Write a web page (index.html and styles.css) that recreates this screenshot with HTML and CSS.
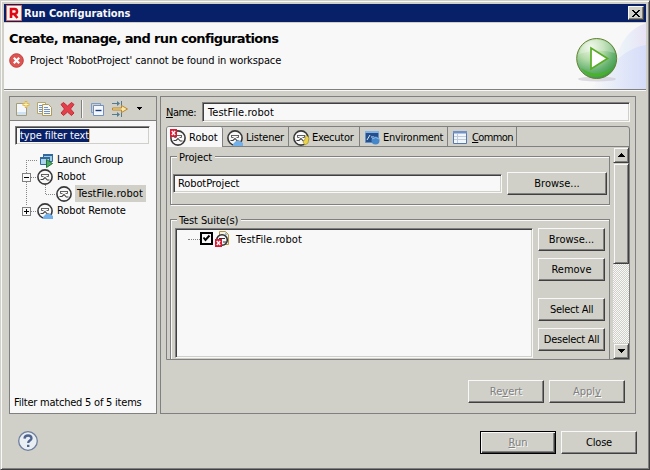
FILE: index.html
```html
<!DOCTYPE html>
<html lang="en">
<head>
<meta charset="utf-8">
<title>Run Configurations</title>
<link rel="stylesheet" href="styles.css">
</head>
<body>
<svg class="defs" aria-hidden="true">
  <defs>
    <radialGradient id="ball" cx="35%" cy="22%" r="80%"><stop offset="0" stop-color="#eef6e8"/><stop offset=".4" stop-color="#b4dba9"/><stop offset=".75" stop-color="#65b16f"/><stop offset="1" stop-color="#3f9a45"/></radialGradient>
    <linearGradient id="sky" x2="1"><stop offset="0" stop-color="#f8f8f8"/><stop offset=".5" stop-color="#eaf0f8"/><stop offset="1" stop-color="#e8e2f5"/></linearGradient>
    <linearGradient id="wave" x2="1"><stop offset="0" stop-color="#f8f8f8"/><stop offset=".5" stop-color="#e4eaf8"/><stop offset="1" stop-color="#d5dcf8"/></linearGradient>
    <symbol id="robot" viewBox="0 0 16 16">
      <circle cx="8" cy="8" r="7.1" fill="#f8f8f8" stroke="#383838" stroke-width="1.6"/>
      <path d="M4 5.500h8M4.500 5.500v2h2M11.500 5.500v2h-2" fill="none" stroke="#505050" stroke-width=".9"/>
      <path d="M3.500 10.500h2.500l2-2 2.300 2.500h2.200" fill="none" stroke="#404040" stroke-width="1.1"/>
    </symbol>
    <symbol id="redx" viewBox="0 0 7 8"><path d="M0 0h7v8H0z" fill="#d91c35"/><path d="M1.800 2l3.400 4M5.200 2L1.800 6" stroke="#fff" stroke-width="1.300"/></symbol>
  </defs>
</svg>
<div class="window">
  <div class="titlebar">
    <svg class="logo" width="16" height="16" viewBox="0 0 16 16"><path d="M.5.5h15v15H.5z" fill="#f8f8f0" stroke="#e66a60"/><path d="M5 13V4h3.500a2.200 2.200 0 0 1 0 5H5M8 9l3.500 4" fill="none" stroke="#e00814" stroke-width="2.600"/></svg>
    <span class="title">Run Configurations</span>
    <button class="x"><svg width="8" height="7" viewBox="0 0 8 7" shape-rendering="crispEdges"><path d="M0 0h2v1h1v1h2V1h1V0h2v1H7v1H6v1H5v1h1v1h1v1h1v1H6V6H5V5H3v1H2v1H0V6h1V5h1V4h1V3H2V2H1V1H0z"/></svg></button>
  </div>
  <header class="header">
    <div class="headtext">
      <h1>Create, manage, and run configurations</h1>
      <p class="error"><svg width="16" height="16" viewBox="0 0 16 16"><circle cx="7.500" cy="8.500" r="6.800" fill="#dc5552" stroke="#c43d3d"/><path d="M4.800 5.800l5.400 5.400M10.200 5.800l-5.400 5.400" stroke="#fff" stroke-width="2.200"/></svg><span class="t-error">Project 'RobotProject' cannot be found in workspace</span></p>
    </div>
    <svg class="banner" width="76" height="66" viewBox="0 0 76 66">
      <path d="M76 0C57 7 46 21 38 66h38z" fill="url(#sky)"/><path d="M76 22C56 25 44 38 20 66h56z" fill="url(#wave)"/>
      <ellipse cx="27" cy="56" rx="19" ry="2.500" fill="#c9c4d2" opacity=".6"/>
      <circle cx="26.700" cy="35.500" r="20" fill="url(#ball)" stroke="#64812f"/>
      <path d="M11 45a18.500 18.500 0 0 0 31 0q-15 11-31 0" fill="#46b51d" opacity=".8"/>
      <path d="M9 31q4-14 18-14t18 13q-17-5-36 1" fill="#fff" opacity=".25"/>
      <path d="M21 25v21l16.500-10.500z" fill="#fff" stroke="#58ad24" stroke-width="1.700"/>
    </svg>
  </header>
  <main class="main">
    <section class="side">
      <div class="toolbar">
        <svg width="16" height="16" viewBox="0 0 16 16"><path d="M1.500 2.500h7l3 4v8h-10z" fill="#f4f7fb" stroke="#a59c78"/><path d="M2 11h9v3H2z" fill="#cfe2f5"/><path d="M11 0v7M7.500 3.500h7" stroke="#dfb341" stroke-width="2.400"/><path d="M11 1v5M8.500 3.500h5" stroke="#fff3b8"/></svg>
        <svg width="16" height="16" viewBox="0 0 16 16"><path d="M.5 1.500h8v11h-8z" fill="#f8f8f4" stroke="#b5a66c"/><path d="M2 4.500h3M2 6.500h3M2 8.500h3M2 10.500h3" stroke="#7391c2"/><path d="M5.500 3.500h6l3 3v8h-9z" fill="#f8f8f4" stroke="#ad9b5e"/><path d="M7 6.500h4M7 8.500h6M7 10.500h6M7 12.500h6" stroke="#7391c2"/></svg>
        <svg width="16" height="16" viewBox="0 0 16 16"><path d="M2 3.500l2.500-2L8.500 5l4-3.500 2.500 2L11.500 8l3.500 4-2.500 2.500-4-3.500-4 3.500L2 12l3.500-4z" fill="#e2404a" stroke="#c52c38"/></svg>
        <i class="sep"></i>
        <svg width="16" height="16" viewBox="0 0 16 16"><path d="M2.500 11.500v-9h9v2M2.500 11.500h2" fill="none" stroke="#7b9bc9"/><path d="M4.500 4.500h10v10h-10z" fill="#f4f8fc" stroke="#718fc0"/><path d="M6.500 9.500h6" stroke="#173d83" stroke-width="1.400"/></svg>
        <svg width="18" height="16" viewBox="-1 0 18 16"><path d="M0 2.500h6M0 13.500h6M9.500 0v5M9.500 11v5" stroke="#547c91"/><path d="M5 0l3 2.500L5 5zM5 11l3 2.500L5 16z" fill="#547c91"/><path d="M.5 7h9V4.500l6 3.500-6 3.500V9h-9z" fill="#f7e8a6" stroke="#bd842a"/></svg>
        <svg width="5" height="3" viewBox="0 0 5 3" class="drop" shape-rendering="crispEdges"><path d="M0 0h5v1H4v1H3v1H2V2H1V1H0z"/></svg>
      </div>
      <div class="filter field"><span class="sel t-filter">type filter text</span></div>
      <div class="tree">
        <svg class="lines" width="45" height="70" viewBox="0 0 45 70" shape-rendering="crispEdges">
          <path d="M10.500 9v45M10 9.500h12M15 26.500h6M15 60.500h6M29.500 34v10M30 43.500h10" stroke="#888" stroke-dasharray="1 1" fill="none"/>
          <path d="M6.500 22.500h8v8h-8zM6.500 56.500h8v8h-8z" fill="#f8f8f8" stroke="#808080"/><path d="M8 26.500h5M8 60.500h5M10.500 58v5" stroke="#000"/>
        </svg>
        <div class="node n1"><svg width="16" height="16" viewBox="-1 0 16 16"><path d="M5.500 2.500h9v7h-9z" fill="#9fcbe5" stroke="#326a9e"/><path d="M5 2h10v2H5z" fill="#326a9e"/><path d="M2.500 5.500h9v7h-9z" fill="#aed5e9" stroke="#326a9e"/><path d="M2 5h10v2H2z" fill="#326a9e"/><path d="M8.500 7.500v8l6-4z" fill="#4dab62" stroke="#25713a"/></svg><span class="t-lg">Launch Group</span></div>
        <div class="node n1"><svg width="16" height="16"><use href="#robot"/></svg><span class="t-rb">Robot</span></div>
        <div class="node n2"><svg width="16" height="16"><use href="#robot"/></svg><span class="picked"><span class="t-tf">TestFile.robot</span></span></div>
        <div class="node n1"><svg width="16" height="16"><use href="#robot"/><path d="M6 16v-2l3-3h4l3 2v3z" fill="#73afe8"/></svg><span class="t-rr">Robot Remote</span></div>
      </div>
      <div class="status"><span class="t-status">Filter matched 5 of 5 items</span></div>
    </section>
    <section class="detail">
      <div class="namerow"><label class="t-name"><u>N</u>ame:</label><div class="field"><span class="t-tf">TestFile.robot</span></div></div>
      <div class="folder">
        <nav class="tabs">
          <div class="tab on w1"><svg width="18" height="17"><use href="#robot" x="1" y="1" width="16" height="16"/><use href="#redx" x="1" width="7" height="8"/></svg><span class="t-rb">Robot</span></div>
          <div class="tab w2"><svg width="17" height="17"><use href="#robot" y="1" width="16" height="16"/><path d="M6 17v-2l3-3h4l3 2v3z" fill="#73afe8"/></svg><span class="t-li">Listener</span></div>
          <div class="tab w3"><svg width="17" height="17"><use href="#robot" y="1" width="16" height="16"/><path d="M13 6l3 3-1 5-3 2-2-3 2-3z" fill="#ead34d" stroke="#a99528" stroke-width=".7"/></svg><span class="t-ex">Executor</span></div>
          <div class="tab w4"><svg width="17" height="17" viewBox="0 0 17 17"><path d="M1.500 2.500h13v11h-13z" fill="#244f8c" stroke="#5f91cf"/><path d="M1 2h14v2H1z" fill="#82b3e8"/><path d="M3 11l3-5M7 8h3" stroke="#d5e7f5"/><circle cx="11.500" cy="11.500" r="4" fill="#4686ca"/><path d="M8 10q4-3 7 0" stroke="#8bbbe5" fill="none"/></svg><span class="t-en">Environment</span></div>
          <div class="tab w5"><svg width="17" height="17" viewBox="0 0 17 17"><path d="M1.500 2.500h13v12h-13z" fill="#f1f6fa" stroke="#5776ae"/><path d="M1 2h14v2.500H1z" fill="#6f91c8"/><path d="M5.500 5v9M2 7.500h12M2 10.500h12" stroke="#bdcbdc"/></svg><span class="t-co"><u>C</u>ommon</span></div>
        </nav>
        <div class="page">
          <div class="content">
            <div class="group project"><span class="legend"><span class="t-pr">Project</span></span><div class="field"><span class="t-rp">RobotProject</span></div><button class="btn"><span class="t-br">Browse...</span></button></div>
            <div class="group suites"><span class="legend"><span class="t-ts">Test Suite(s)</span></span>
              <div class="list field"><div class="item"><i class="dots"></i><svg width="13" height="13" viewBox="0 0 13 13"><path d="M1 1h11v11H1z" fill="#f8f8f8" stroke="#000" stroke-width="2"/><path d="M3.500 5.500l2 2.500 4-4.500" stroke="#000" stroke-width="2" fill="none"/></svg><svg class="file" width="15" height="16" viewBox="0 0 15 16"><path d="M4.500.5h6l3 3v10h-9z" fill="#f7f4dd" stroke="#b69542"/><path d="M10 1v3h3" fill="#9bb8dc"/><circle cx="7" cy="9" r="5.300" fill="#f8f8f8" stroke="#303030" stroke-width="1.600"/><path d="M4 7.500h6M8 11h3" stroke="#303030"/><use href="#redx" y="8" width="7" height="8"/></svg><span class="t-tf">TestFile.robot</span></div></div>
              <div class="stack"><button class="btn"><span class="t-br">Browse...</span></button><button class="btn"><span class="t-re">Remove</span></button><button class="btn gap"><span class="t-sa">Select All</span></button><button class="btn"><span class="t-da">Deselect All</span></button></div>
            </div>
          </div>
          <div class="scroll"><div class="arrow"><svg width="7" height="4" shape-rendering="crispEdges"><path d="M3 0h1v1h1v1h1v1h1v1H0V3h1V2h1V1h1z"/></svg></div><div class="thumb"></div><div class="track"></div><div class="arrow"><svg width="7" height="4" shape-rendering="crispEdges"><path d="M0 0h7v1H6v1H5v1H4v1H3V3H2V2H1V1H0z"/></svg></div></div>
        </div>
      </div>
      <div class="actions"><button class="btn off"><span class="t-rv">Re<u>v</u>ert</span></button><button class="btn off"><span class="t-ap">Appl<u>y</u></span></button></div>
    </section>
  </main>
  <footer class="footer">
    <svg width="20" height="20" viewBox="0 0 20 20"><circle cx="10" cy="10" r="9.300" fill="#e9eef3" stroke="#6d7e9f" stroke-width="1.300"/><path d="M6.500 7.600q.2-3.100 3.600-3.100t3.400 2.800c0 2.300-3.300 2.200-3.300 4.700" fill="none" stroke="#50638f" stroke-width="2.300"/><path d="M9 13.800h2.400v2.200H9z" fill="#50638f"/></svg>
    <button class="btn off default"><span class="t-ru"><u>R</u>un</span></button><button class="btn"><span class="t-cl">Close</span></button>
  </footer>
</div>
</body>
</html>
```
FILE: styles.css
```css
* { box-sizing: border-box; }
body { margin: 0; width: 650px; height: 470px; overflow: hidden; font: 11px/13px "DejaVu Sans Condensed", "DejaVu Sans", sans-serif; font-stretch: condensed; color: #000; }
.defs { position: absolute; width: 0; height: 0; }
svg { display: block; flex: none; }
span, label { white-space: nowrap; }
u { text-decoration: underline; text-underline-offset: 1px; text-decoration-thickness: 1px; text-decoration-skip-ink: none; }
button { font: inherit; color: inherit; margin: 0; padding: 0; }

.window { width: 650px; height: 470px; background: #d0d0c8; padding: 3px 2px 0; border: 1px solid; border-color: #d0d0c8 #404040 #404040 #d0d0c8; box-shadow: inset 1px 1px #f8f8f8, inset -1px -1px #808080; }
.titlebar { height: 18px; margin: 0 1px; background: #082068; display: flex; align-items: center; padding: 0 2px; color: #f8f8f8; font-weight: bold; }
.title { margin-left: 2px; flex: 1; letter-spacing: -.06px; }
.x { width: 16px; height: 14px; display: grid; place-items: center; background: #d0d0c8; border: 1px solid; border-color: #f8f8f8 #404040 #404040 #f8f8f8; box-shadow: inset -1px -1px #808080; }
.header { height: 69px; margin: 0 1px; background: #f8f8f8; border-top: 1px solid #d0d0c8; border-bottom: 1px solid #f8f8f8; box-shadow: inset 0 -1px #808080; display: flex; justify-content: space-between; }
h1 { margin: 8px 0 0 5px; font: bold 13px/16px "DejaVu Sans", sans-serif; white-space: nowrap; letter-spacing: -.64px; }
.error { margin: 5px 0 0 5px; display: flex; align-items: center; gap: 5px; height: 16px; }
.headtext { width: 500px; }

.main { display: flex; gap: 3px; padding: 5px 0 0 6px; height: 323px; }
.side { width: 148px; height: 318px; background: #f8f8f8; border: 1px solid #808080; display: flex; flex-direction: column; }
.toolbar { height: 24px; flex: none; background: #d0d0c8; border-bottom: 1px solid #808080; display: flex; align-items: center; padding-left: 5px; gap: 6px; }
.sep { width: 2px; height: 18px; border-left: 1px solid #808080; border-right: 1px solid #f8f8f8; }
.drop { margin-left: 2px; }
.field { background: #f8f8f8; border: 1px solid; border-color: #808080 #f8f8f8 #f8f8f8 #808080; box-shadow: inset 1px 1px #404040, inset -1px -1px #d0d0c8; height: 20px; display: flex; align-items: center; }
.filter { width: 135px; height: 19px; flex: none; margin: 5px 0 0 5px; padding-left: 4px; }
.sel { background: #082068; color: #f8f8f8; height: 13px; box-shadow: 1px 0 #f0b860; }
.tree { margin-top: 6px; height: 70px; display: grid; grid-template-rows: repeat(4, 17px); grid-template-columns: 1fr; }
.lines { grid-area: 1 / 1 / 5 / 2; margin-left: 6px; }
.node { grid-column: 1; display: flex; align-items: center; gap: 4px; height: 17px; }
.node:nth-of-type(1) { grid-row: 1; }
.node:nth-of-type(2) { grid-row: 2; }
.node:nth-of-type(3) { grid-row: 3; }
.node:nth-of-type(4) { grid-row: 4; }
.n1 { padding-left: 27px; }
.n2 { padding-left: 46px; }
.picked { background: #d0d0c8; height: 17px; width: 71px; padding: 2px 0 0 2px; margin-left: -1px; }
.status { margin: auto 0 4px 4px; }

.t-error, .t-filter { letter-spacing: -.12px; }
.t-status { letter-spacing: -.22px; }
.t-lg { letter-spacing: -.25px; }
.t-rr, .t-pr, .t-ts, .t-rp { letter-spacing: -.1px; }
.t-tf { letter-spacing: .06px; }
.t-name { letter-spacing: -.5px; }
.t-li, .t-ex { letter-spacing: -.25px; }
.t-en, .t-sa, .t-da { letter-spacing: -.27px; }
.t-co { letter-spacing: -.6px; }
.t-cl { letter-spacing: -.2px; }

.detail { width: 476px; height: 318px; border: 1px solid #808080; padding: 5px 5px 0 5px; }
.namerow { display: flex; height: 20px; align-items: flex-start; justify-content: space-between; }
.namerow label { margin-top: 4px; }
.namerow .field { width: 428px; padding-left: 5px; height: 20px; }
.folder { width: 464px; height: 234px; margin-top: 4px; border: 1px solid #808080; border-radius: 3px 3px 0 0; }
.tabs { height: 20px; display: flex; border-bottom: 1px solid #808080; }
.tab { height: 19px; border-right: 1px solid #808080; display: flex; align-items: center; padding: 1px 0 0 4px; gap: 2px; }
.tab.on { background: #f8f8f8; height: 20px; padding: 0 0 0 2px; border-radius: 2px 2px 0 0; }
.w1 { width: 56px; } .w2 { width: 66px; } .w3 { width: 71px; } .w4 { width: 88px; } .w5 { width: 69px; gap: 3px; }
.page { height: 212px; display: flex; justify-content: space-between; overflow: hidden; }
.content { width: 443px; padding: 9px 0 0 3px; height: 212px; overflow: hidden; }
.group { width: 440px; border: 1px solid #808080; box-shadow: 1px 1px #f8f8f8, inset 1px 1px #f8f8f8; display: flex; position: relative; }
.legend { position: absolute; left: 6px; top: -7px; height: 14px; background: #d0d0c8; padding: 1px 3px 0 2px; }
.project { height: 49px; padding: 15px 2px 0 2px; justify-content: space-between; }
.project .field { width: 329px; height: 19px; margin-top: 2px; padding-left: 4px; }
.project .btn { width: 100px; height: 23px; }
.suites { height: 170px; margin-top: 14px; padding: 8px 0 0 4px; gap: 5px; }
.list { width: 358px; height: 130px; display: block; padding: 2px 0 0 12px; }
.item { display: flex; align-items: center; height: 17px; }
.item svg { margin-top: -2px; }
.dots { width: 12px; border-top: 1px dotted #808080; }
.file { margin: 0 6px 0 2px; }
.stack { width: 67px; display: flex; flex-direction: column; gap: 7px; }
.btn { height: 23px; display: grid; place-items: center; background: #d0d0c8; border: 1px solid; border-color: #f8f8f8 #404040 #404040 #f8f8f8; box-shadow: inset -1px -1px #808080; border-radius: 0; flex: none; }
.stack .gap { margin-top: 10px; }
.scroll { width: 16px; height: 212px; display: flex; flex-direction: column; }
.arrow, .thumb { background: #d0d0c8; border: 1px solid; border-color: #d0d0c8 #404040 #404040 #d0d0c8; box-shadow: inset 1px 1px #f8f8f8, inset -1px -1px #808080; }
.arrow { height: 16px; display: grid; place-items: center; flex: none; }
.thumb { height: 101px; }
.track { flex: 1; background: repeating-conic-gradient(#f8f8f8 0 25%, #d0d0c8 0 50%) 0 0 / 2px 2px; }
.actions { display: flex; justify-content: flex-end; gap: 5px; padding: 20px 5px 0 0; }
.actions .btn, .footer .btn { width: 76px; }
.off { color: #808080; text-shadow: 1px 1px #f8f8f8; }
.footer { display: flex; align-items: flex-start; height: 23px; margin: 17px 10px 0 15px; gap: 5px; }
.footer svg { margin-right: auto; }
.default { border: 1px solid #000; box-shadow: inset 1px 1px #f8f8f8, inset -1px -1px #404040, inset -2px -2px #808080; }
```
